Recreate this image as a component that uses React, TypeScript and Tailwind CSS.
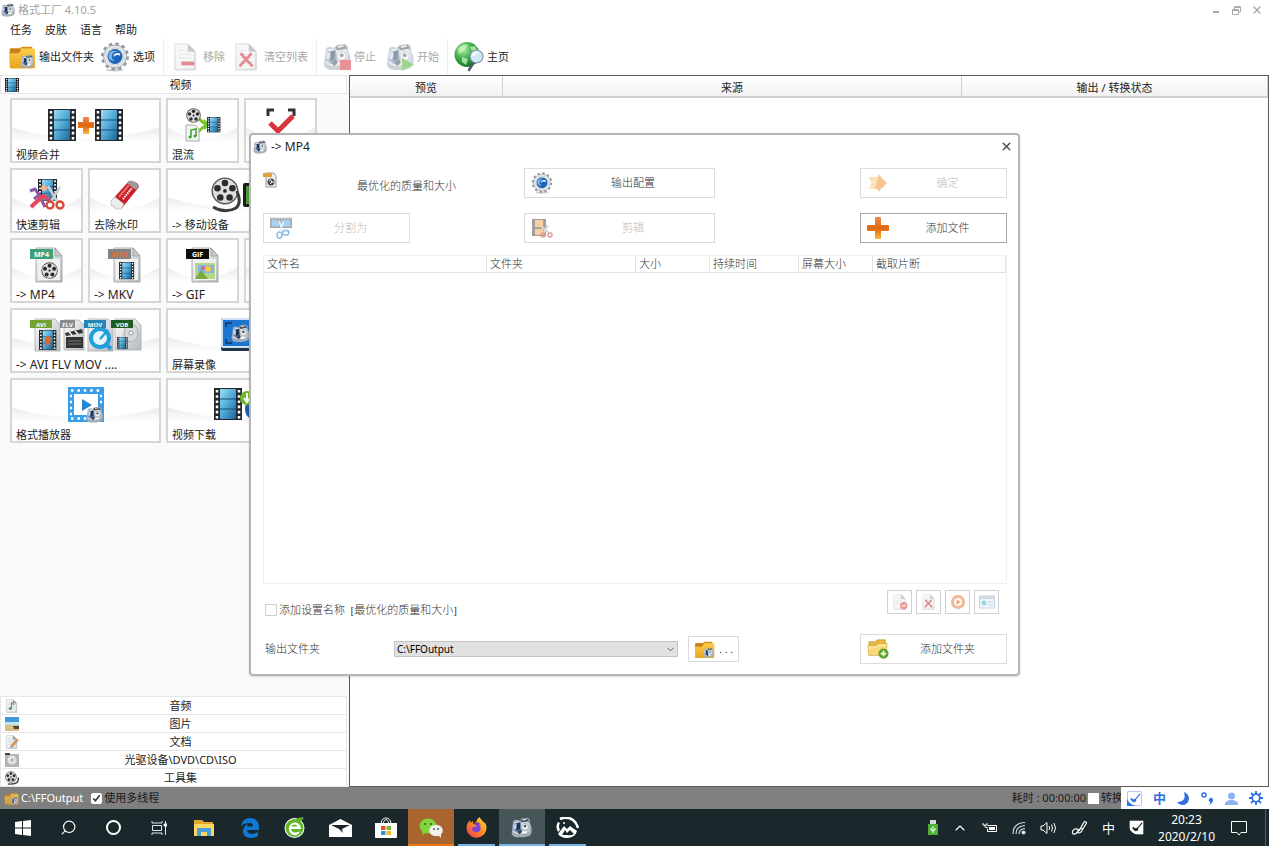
import type { ReactNode } from 'react'
import { ChevronDown, ChevronUp, Search, X } from 'lucide-react'
import { FaFirefoxBrowser } from 'react-icons/fa'

const songFont = "font-['Liberation_Serif','Noto_Sans_CJK_SC',serif] font-light"

/* ---------- drawings ---------- */

function Defs() {
  return (
    <svg width="0" height="0" className="absolute" aria-hidden="true">
      <defs>
        <linearGradient id="film" x1="0" y1="0" x2="1" y2="1">
          <stop offset="0" stopColor="#9bdcf5" />
          <stop offset=".5" stopColor="#4fa9d6" />
          <stop offset="1" stopColor="#1e6496" />
        </linearGradient>
        <linearGradient id="gold" x1="0" y1="0" x2="0" y2="1">
          <stop offset="0" stopColor="#fbcf4c" />
          <stop offset="1" stopColor="#e9a41e" />
        </linearGradient>
        <linearGradient id="orange" x1="0" y1="0" x2="0" y2="1">
          <stop offset="0" stopColor="#f08a52" />
          <stop offset=".5" stopColor="#e0660f" />
          <stop offset="1" stopColor="#f8b637" />
        </linearGradient>
        <linearGradient id="metal" x1="0" y1="0" x2="1" y2="1">
          <stop offset="0" stopColor="#ffffff" />
          <stop offset="1" stopColor="#b3b9c0" />
        </linearGradient>
        <linearGradient id="swoosh" x1="0" y1="0" x2="0" y2="1">
          <stop offset="0" stopColor="#ececec" />
          <stop offset="1" stopColor="#ffffff" />
        </linearGradient>
        <radialGradient id="globe" cx=".35" cy=".3" r=".8">
          <stop offset="0" stopColor="#b5efa5" />
          <stop offset=".5" stopColor="#37a847" />
          <stop offset="1" stopColor="#0b6b22" />
        </radialGradient>
        <linearGradient id="fire" x1="1" y1="0" x2="0" y2="1">
          <stop offset="0" stopColor="#ffe14a" />
          <stop offset=".5" stopColor="#ff8a22" />
          <stop offset="1" stopColor="#f0305c" />
        </linearGradient>
      </defs>
    </svg>
  )
}

function CamArt() {
  return (
    <g>
      <path d="M3 8Q3 4 7 4L12 5 15 2 24 1 27 4V9L29 13Q31 25 26 27L18 29H8Q1 28 1 22Z" fill="#a3acb9" />
      <path d="M4 9Q8 5 13 7L24 6 27 13 26 23Q20 28 8 26L3 21Z" fill="url(#metal)" />
      <path d="M13 4 23 2 26 6 15 8Z" fill="#4a525d" />
      <path d="M16 4.500 22 3.200" stroke="#e6eaee" strokeWidth="1.500" />
      <path d="M5 9 14 7 15 17 9 23 3 19Z" fill="#6f8fb8" />
      <path d="M8 9 13 8 13 17 8 20Z" fill="#22334f" />
      <path d="M5 11 8 10 7 16 4 18Z" fill="#cfe0f3" />
      <path d="M9 21 14 17 16 21 12 25Z" fill="#35445c" />
      <circle cx="20" cy="14" r="5" fill="#f0f3f6" stroke="#8f98a3" />
      <circle cx="20" cy="13" r="2" fill="#47546a" />
      <path d="M5 24Q15 29 26 22" stroke="#7d8794" fill="none" />
      <path d="M16 20H24L22 24H15Z" fill="#fff" stroke="#a2aab3" strokeWidth=".6" />
    </g>
  )
}

function Cam({ size = 14, badge }: { size?: number; badge?: 'stop' | 'play' }) {
  return (
    <svg width={size} height={size} viewBox="0 0 30 30">
      <CamArt />
      {badge === 'stop' && <path d="M18 18H30V29H18Z" fill="#d32530" />}
      {badge === 'play' && <path d="M17 16 30 23 17 30Z" fill="#3fae24" />}
    </svg>
  )
}

function FolderCam({ size = 28 }: { size?: number }) {
  return (
    <svg width={size} height={size} viewBox="0 0 30 30">
      <path d="M2 6H12L15 4H26V27H2Z" fill="#d88f14" />
      <path d="M1 10H11L14 6H28Q29 6 29 8V26Q29 27 27 27H3Q2 27 2 25Z" fill="url(#gold)" />
      <path d="M2 6H12L14 8 11 11H2Z" fill="#c98018" />
      <g transform="translate(13 12) scale(.5)">
        <CamArt />
      </g>
    </svg>
  )
}

function Gear({ size = 30 }: { size?: number }) {
  return (
    <svg width={size} height={size} viewBox="0 0 30 30">
      <ellipse cx="15" cy="28" rx="9" ry="1.500" fill="#cfcfcf" />
      <circle cx="15" cy="14.500" r="12.500" fill="none" stroke="#92989f" strokeWidth="3" strokeDasharray="3.300 3.245" />
      <circle cx="15" cy="14.500" r="11.500" fill="#e4e7ea" stroke="#979da4" strokeWidth=".8" />
      <circle cx="15" cy="14.500" r="8.500" fill="#f7f9fa" stroke="#b7bcc2" strokeWidth=".6" />
      <circle cx="15" cy="14.500" r="7.500" fill="#1b63b4" />
      <path d="M19.500 10.500Q14 8 12 13Q11 17 15 19Q8 19 8.500 13Q11 6 19.500 10.500Z" fill="#79b9ee" />
      <path d="M18 11Q13 11 13.500 15Q16 12 20 13.500Q21 11 18 11Z" fill="#f4faff" />
    </svg>
  )
}

function PageArt() {
  return (
    <g>
      <path d="M3 1H17L25 9V29H3Z" fill="url(#metal)" stroke="#a9a9a9" strokeWidth=".8" />
      <path d="M5 3H16V10H23V27H5Z" fill="#f0f1f3" />
      <path d="M17 1V9H25Z" fill="#8f949a" />
      <path d="M7 8H14M7 12H21M7 16H21M7 20H21" stroke="#c3ccd5" />
    </g>
  )
}

function Page({ mark, size = 28 }: { mark?: 'minus' | 'cross' | 'note' | 'pen' | 'dot'; size?: number }) {
  return (
    <svg width={size} height={size} viewBox="0 0 30 30">
      <PageArt />
      {mark === 'minus' && <path d="M10 20H24V24H10Z" fill="#cc1726" />}
      {mark === 'cross' && <path d="M8 11 21 25M20 11 7 25" stroke="#cc1726" strokeWidth="3" />}
      {mark === 'note' && (
        <g fill="#2fa336" stroke="#2fa336" strokeWidth="2">
          <path d="M14 20V7Q15 11 20 12" fill="none" />
          <ellipse cx="11.500" cy="20.500" rx="2.500" ry="2" />
        </g>
      )}
      {mark === 'pen' && <path d="M13 22 25 8 29 11 17 25 12 27Z" fill="#f09b35" stroke="#6a86b5" />}
      {mark === 'dot' && (
        <g>
          <circle cx="22" cy="22" r="7" fill="#d83a32" />
          <path d="M18 22H26" stroke="#fff" strokeWidth="2" />
        </g>
      )}
    </svg>
  )
}

// filmstrip in a 28x32 box
function FilmArt() {
  return (
    <g>
      <path d="M0 0H28V32H0Z" fill="#22282e" />
      <path d="M6 1H22V31H6Z" fill="url(#film)" />
      <path d="M6 11H22M6 21H22" stroke="#194c70" />
      <path d="M3 2V31M25 2V31" stroke="#fff" strokeWidth="2.500" strokeDasharray="2.600 2.600" />
    </g>
  )
}

function ReelArt() {
  return (
    <g>
      <circle cx="15" cy="15" r="14.500" fill="#555" />
      <circle cx="15" cy="15" r="13" fill="#dedede" />
      <g fill="#2c2c2c">
        <circle cx="15" cy="6.500" r="3.500" />
        <circle cx="23" cy="12" r="3.500" />
        <circle cx="20" cy="22" r="3.500" />
        <circle cx="10" cy="22" r="3.500" />
        <circle cx="7" cy="12" r="3.500" />
        <circle cx="15" cy="15" r="2" />
      </g>
    </g>
  )
}

function Film({ size = 14 }: { size?: number }) {
  return (
    <svg width={size} height={size} viewBox="0 0 28 32" preserveAspectRatio="none">
      <FilmArt />
    </svg>
  )
}

function Plus({ size = 22 }: { size?: number }) {
  return (
    <svg width={size} height={size} viewBox="0 0 22 22">
      <path d="M8 1Q8 0 9 0H13Q14 0 14 1V8H21Q22 8 22 9V13Q22 14 21 14H14V21Q14 22 13 22H9Q8 22 8 21V14H1Q0 14 0 13V9Q0 8 1 8H8Z" fill="url(#orange)" />
    </svg>
  )
}

function Globe() {
  return (
    <svg width="30" height="30" viewBox="0 0 30 30">
      <circle cx="13" cy="12.500" r="12.500" fill="url(#globe)" />
      <path d="M4 7Q9 1 14 3L11 8 5 12ZM16 5 21 4 23 8 18 9ZM8 15 14 17 12 23 8 20Z" fill="#c9f3bd" opacity=".75" />
      <path d="M20 20 15 28" stroke="#4c5a66" strokeWidth="2.500" strokeLinecap="round" />
      <circle cx="22.500" cy="14.500" r="6.500" fill="#d3e8f6" stroke="#8294a2" strokeWidth="1.200" />
      <path d="M19 14Q20 10 24 11" stroke="#fff" strokeWidth="2" fill="none" />
    </svg>
  )
}

function MergeIcon() {
  return (
    <svg width="76" height="32" viewBox="0 0 76 32">
      <FilmArt />
      <g transform="translate(47 0)">
        <FilmArt />
      </g>
      <path d="M35 8H41V13H46V19H41V25H35V19H30V13H35Z" fill="url(#orange)" />
    </svg>
  )
}

function MixIcon() {
  return (
    <svg width="36" height="36" viewBox="0 0 36 36">
      <path d="M12 8Q16 16 24 18M12 27Q17 19 24 18" stroke="#7ac52e" strokeWidth="3" fill="none" />
      <path d="M19 12 26 18 19 23Z" fill="#7ac52e" />
      <g transform="translate(1 1) scale(.5)">
        <ReelArt />
      </g>
      <path d="M1 18H10L14 22V34H1Z" fill="#f3f3f3" stroke="#aaa" />
      <path d="M6 30V23L11 22V29" stroke="#36a72f" strokeWidth="1.500" fill="none" />
      <circle cx="5" cy="30" r="1.500" fill="#36a72f" />
      <circle cx="10" cy="29" r="1.500" fill="#36a72f" />
      <g transform="translate(22 10) scale(.48)">
        <FilmArt />
      </g>
    </svg>
  )
}

function CropCheck() {
  return (
    <svg width="30" height="34" viewBox="0 0 30 34">
      <path d="M2 8V2H8M22 2H28V8M2 26V32H8M22 32H28V26" stroke="#333" strokeWidth="3" fill="none" />
      <path d="M4 15 12 23 27 8" stroke="#d9363b" strokeWidth="5" fill="none" />
    </svg>
  )
}

function QuickCut() {
  return (
    <svg width="36" height="32" viewBox="0 0 36 32">
      <g transform="translate(9 0) scale(.68)">
        <FilmArt />
      </g>
      <circle cx="15" cy="9" r="3" fill="#efb28c" />
      <path d="M1 12 6 10 10 16 5 20M10 16 16 28" stroke="#8a5aa8" strokeWidth="3" fill="none" />
      <path d="M2 28 14 17 20 20" stroke="#e8475a" strokeWidth="4" fill="none" />
      <path d="M19 7 29 24M31 8 21 24" stroke="#c9ced4" strokeWidth="2.500" />
      <circle cx="21" cy="26" r="3.500" fill="none" stroke="#d94736" strokeWidth="2.300" />
      <circle cx="31" cy="26" r="3.500" fill="none" stroke="#d94736" strokeWidth="2.300" />
    </svg>
  )
}

function Eraser() {
  return (
    <svg width="30" height="30" viewBox="0 0 30 30">
      <path d="M19 1Q22 0 28 4L29 7 12 28 7 29 1 25V21Z" fill="#c81f28" />
      <path d="M19 1Q24 0 29 6L26 10 17 3Z" fill="#9c9c9c" />
      <path d="M1 21 5 17 14 24 11 29H7L1 25Z" fill="#ededed" stroke="#b5b5b5" strokeWidth=".6" />
      <path d="M9 17 19 5" stroke="#ef6a64" strokeWidth="2" />
      <path d="M13 19 22 8" stroke="#fff" strokeWidth="2" strokeDasharray="1.500 .8" />
    </svg>
  )
}

function MobileIcon() {
  return (
    <svg width="66" height="36" viewBox="0 0 66 36">
      <g transform="translate(2 0) scale(.93)">
        <ReelArt />
      </g>
      <path d="M28 14Q33 26 27 31Q16 37 4 30" stroke="#3a3a3a" strokeWidth="3" fill="none" />
      <rect x="34" y="6" width="31" height="24" rx="2" fill="#1d1d1d" />
      <path d="M37 9H61V27H37Z" fill="#4d9a3d" />
    </svg>
  )
}

function TaggedPage({ tag, fill, ink = '#fff', kind }: { tag: string; fill: string; ink?: string; kind: 'reel' | 'film' | 'gif' }) {
  return (
    <svg width="38" height="38" viewBox="0 0 38 38">
      <path d="M8 2H27L34 10V36H8Z" fill="url(#metal)" stroke="#999" strokeWidth=".8" />
      <path d="M10 13H32V34H10Z" fill="#f1f1f1" />
      <path d="M27 2V10H34Z" fill="#c9c9c9" stroke="#8e8e8e" strokeWidth=".6" />
      <path d="M2 3H25V13H2Z" fill={fill} />
      <text x="13.500" y="10.500" textAnchor="middle" fontSize="7" fontWeight="700" fontFamily="Open Sans, sans-serif" fill={ink}>
        {tag}
      </text>
      {kind === 'reel' && (
        <g transform="translate(13 16) scale(.57)">
          <ReelArt />
        </g>
      )}
      {kind === 'film' && (
        <g transform="translate(13 16) scale(.54)">
          <FilmArt />
        </g>
      )}
      {kind === 'gif' && (
        <g>
          <path d="M11 17H31V33H11Z" fill="#b5d884" />
          <path d="M14 19H30V27H14Z" fill="#7fb8e8" />
          <path d="M11 33 17 24 24 33Z" fill="#78a940" />
          <circle cx="24" cy="23" r="3" fill="#f4cb3e" />
          <circle cx="19" cy="22" r="2" fill="#d9647c" />
        </g>
      )}
    </svg>
  )
}

function Tag({ x, label, fill, width }: { x: number; label: string; fill: string; width: number }) {
  return (
    <g>
      <path d={`M${x} 2H${x + width}V10H${x}Z`} fill={fill} />
      <text x={x + width / 2} y="8.500" textAnchor="middle" fontSize="6" fontWeight="700" fontFamily="Open Sans, sans-serif" fill="#fff">
        {label}
      </text>
    </g>
  )
}

function MultiFormat() {
  return (
    <svg width="114" height="34" viewBox="0 0 114 34">
      <g stroke="#aaa" strokeWidth=".8" fill="url(#metal)">
        <path d="M6 1H26L31 6V33H6Z" />
        <path d="M35 2H50L55 7V32H35Z" />
        <path d="M59 1H79L84 6V33H59Z" />
        <path d="M86 1H106L112 7V32H86Z" />
      </g>
      <g transform="translate(10 12) scale(.62)">
        <FilmArt />
        <path d="M9 14Q15 5 20 14L17 24H11Z" fill="#d06d36" />
      </g>
      <path d="M36 15 53 11 54 15 37 18Z" fill="#333" />
      <path d="M40 14 43 17M46 13 49 16" stroke="#fff" strokeWidth="1.500" />
      <path d="M37 19H54V30H37Z" fill="#333" />
      <path d="M39 23H52M39 26H52" stroke="#777" />
      <circle cx="71" cy="20" r="9" fill="#e8f4fa" stroke="#229fd9" strokeWidth="4" />
      <path d="M71 21 79 12" stroke="#229fd9" strokeWidth="2.500" />
      <path d="M76 25 82 31" stroke="#229fd9" strokeWidth="4" />
      <ellipse cx="102" cy="15" rx="7" ry="9" fill="#d5d8da" stroke="#aaa" />
      <circle cx="102" cy="15" r="2" fill="#fff" stroke="#999" />
      <g transform="translate(88 19) scale(.38)">
        <FilmArt />
      </g>
      <Tag x={1} label="AVI" fill="#78a22f" width={22} />
      <Tag x={31} label="FLV" fill="#8c8c8c" width={15} />
      <Tag x={55} label="MOV" fill="#2585b5" width={22} />
      <Tag x={82} label="VOB" fill="#1b5b24" width={22} />
    </svg>
  )
}

function ScreenRecord() {
  return (
    <svg width="44" height="36" viewBox="0 0 44 36">
      <rect x="1" y="1" width="42" height="33" rx="2" fill="#20344e" />
      <rect x="1" y="1" width="42" height="30" rx="2" fill="#cfe3f5" />
      <path d="M3 3H41V29H3Z" fill="#1c75cf" />
      <path d="M6 10V6H12M32 6H38V10M6 22V26H12M32 26H38V22" fill="none" stroke="#12356b" strokeWidth="1.500" />
      <g transform="translate(11 7) scale(.62)">
        <CamArt />
      </g>
    </svg>
  )
}

function PlayerIcon() {
  return (
    <svg width="36" height="36" viewBox="0 0 36 36">
      <path d="M0 0H36V35H0Z" fill="#399fea" />
      <path d="M6 7H30V28H6Z" fill="#fff" />
      <path d="M3 3.500H34M3 31.500H34" stroke="#fff" strokeWidth="2.500" strokeDasharray="2.500 3.900" />
      <path d="M2 9H4M2 15H4M2 21H4M2 27H4M32 9H34M32 15H34" stroke="#fff" strokeWidth="2.500" />
      <path d="M14 12 24 18 14 24Z" fill="#2487d4" />
      <g transform="translate(18 19) scale(.57)">
        <CamArt />
      </g>
    </svg>
  )
}

function DownloadIcon() {
  return (
    <svg width="56" height="34" viewBox="0 0 56 34">
      <FilmArt />
      <circle cx="43" cy="21" r="12" fill="#1e5da8" />
      <path d="M36 14Q44 9 49 17L44 21 38 19Z" fill="#6cb547" />
      <circle cx="33" cy="10" r="7" fill="#6db82c" />
      <path d="M33 5V12M30 10 33 14 36 10" stroke="#fff" strokeWidth="2" fill="none" />
    </svg>
  )
}

function SplitIcon() {
  return (
    <svg width="28" height="28" viewBox="0 0 28 28">
      <path d="M0 1H28V14H0Z" fill="#4b535a" />
      <path d="M2 4H12V12H2ZM15 4H26V12H15Z" fill="#51aaea" />
      <path d="M2 2.500H27" stroke="#fff" strokeDasharray="2 2" />
      <path d="M12 5 16 19M17 6 12 20" stroke="#dceaf5" strokeWidth="2" />
      <ellipse cx="12" cy="23" rx="3" ry="4" fill="none" stroke="#2c80ca" strokeWidth="2" />
      <ellipse cx="20" cy="20" rx="4" ry="3" fill="none" stroke="#2c80ca" strokeWidth="2" />
    </svg>
  )
}

function CutIcon() {
  return (
    <svg width="22" height="22" viewBox="0 0 22 22">
      <path d="M1 2H15V19H1Z" fill="#4d443b" />
      <path d="M4 3H12V10H4ZM4 12H12V18H4Z" fill="#f3a246" />
      <path d="M10 9 19 17M17 8 12 17" stroke="#b7b7b7" strokeWidth="2" />
      <circle cx="12" cy="18" r="2" fill="none" stroke="#c7392f" strokeWidth="1.500" />
      <circle cx="19" cy="18" r="2" fill="none" stroke="#c7392f" strokeWidth="1.500" />
    </svg>
  )
}

function Arrow() {
  return (
    <svg width="20" height="20" viewBox="0 0 20 20">
      <path d="M1 4H10V1L19 10 10 19V16H1L4 10Z" fill="#f38b23" />
      <path d="M1 4H10L7 16H1L4 10Z" fill="#f9c676" />
    </svg>
  )
}

function FolderPlus() {
  return (
    <svg width="24" height="22" viewBox="0 0 24 22">
      <path d="M2 3H9L11 1H20V15H3Z" fill="#e6b840" stroke="#b98a1c" strokeWidth=".6" />
      <path d="M1 7H10L12 5H22L21 18H2Z" fill="#f8da78" stroke="#c59a35" strokeWidth=".6" />
      <path d="M2 10 11 9 13 7 21 7" stroke="#fff3c1" fill="none" />
      <circle cx="18" cy="16" r="5.500" fill="#5da62b" />
      <path d="M18 13V19M15 16H21" stroke="#fff" strokeWidth="1.800" />
    </svg>
  )
}

function Picture() {
  return (
    <svg width="14" height="14" viewBox="0 0 14 14">
      <path d="M0 0H14V14H0Z" fill="#3f9bd8" />
      <path d="M0 5H14V8H0Z" fill="#bfe3f0" />
      <path d="M0 8H14V14H0Z" fill="#d8bd87" />
      <path d="M8 9H14V12H9Z" fill="#4d4538" />
    </svg>
  )
}

function Disc() {
  return (
    <svg width="14" height="14" viewBox="0 0 14 14">
      <path d="M0 1H14V14H0Z" fill="#b4b4b4" />
      <path d="M0 0H5V2H0Z" fill="#444" />
      <circle cx="7" cy="7" r="4.500" fill="#e2e2e2" />
      <path d="M7 7 10 4 11 7Z" fill="#bde2c9" />
      <circle cx="7" cy="7" r="1" fill="#888" />
    </svg>
  )
}

function Toolset() {
  return (
    <svg width="14" height="14" viewBox="0 0 30 30">
      <g transform="scale(.85)">
        <ReelArt />
      </g>
      <path d="M28 14Q32 30 6 28" stroke="#444" strokeWidth="3" fill="none" />
    </svg>
  )
}

function ImeMark({ bg = '#2f74e0', size = 16 }: { bg?: string; size?: number }) {
  return (
    <svg width={size} height={size} viewBox="0 0 16 16">
      <rect x=".5" y=".5" width="15" height="15" rx="1" fill="#fff" stroke={bg} strokeOpacity=".4" />
      <path d="M0 8Q2 14 9 16H0Z" fill={bg} />
      <path d="M4 8 7.500 11.500" stroke={bg} strokeWidth="2" />
      <path d="M8 10 14 3" stroke={bg} strokeWidth="1.200" />
      <circle cx="8" cy="10" r="1.800" fill={bg} />
    </svg>
  )
}

/* ---------- main window ---------- */

function ToolButton({ icon, label, disabled }: { icon: ReactNode; label: string; disabled?: boolean }) {
  return (
    <button type="button" disabled={disabled} className="flex items-center gap-[3px] disabled:text-[#a8a8a8]">
      <span className={disabled ? 'opacity-50' : ''}>{icon}</span>
      {label}
    </button>
  )
}

function Divider({ className }: { className: string }) {
  return <span className={`h-9 w-px bg-[#ececec] ${className}`} />
}

const tiles: { label: string; wide?: boolean; latin?: boolean; icon: ReactNode }[] = [
  { label: '视频合并', wide: true, icon: <MergeIcon /> },
  { label: '混流', icon: <MixIcon /> },
  { label: '', icon: <CropCheck /> },
  { label: '快速剪辑', icon: <QuickCut /> },
  { label: '去除水印', icon: <Eraser /> },
  { label: '-> 移动设备', wide: true, icon: <MobileIcon /> },
  { label: '-> MP4', latin: true, icon: <TaggedPage tag="MP4" fill="#3fa17a" kind="reel" /> },
  { label: '-> MKV', latin: true, icon: <TaggedPage tag="MKV" fill="#848484" ink="#ef6b2f" kind="film" /> },
  { label: '-> GIF', latin: true, icon: <TaggedPage tag="GIF" fill="#0d0d0d" kind="gif" /> },
  { label: '', icon: null },
  { label: '-> AVI FLV MOV ....', wide: true, latin: true, icon: <MultiFormat /> },
  { label: '屏幕录像', wide: true, icon: <ScreenRecord /> },
  { label: '格式播放器', wide: true, icon: <PlayerIcon /> },
  { label: '视频下载', wide: true, icon: <DownloadIcon /> },
]

const categories = [
  { label: '音频', icon: <Page mark="note" size={14} /> },
  { label: '图片', icon: <Picture /> },
  { label: '文档', icon: <Page mark="pen" size={14} /> },
  { label: '光驱设备\\DVD\\CD\\ISO', icon: <Disc /> },
  { label: '工具集', icon: <Toolset /> },
]

function Tile({ label, wide, latin, icon }: { label: string; wide?: boolean; latin?: boolean; icon: ReactNode }) {
  return (
    <button
      type="button"
      aria-label={label || undefined}
      className={`relative flex h-[65px] flex-col border-2 border-[#d6d6d6] bg-white text-left ${wide ? 'col-span-2' : ''}`}
    >
      <svg className="absolute inset-0 size-full" viewBox="0 0 100 60" preserveAspectRatio="none" aria-hidden="true">
        <path d="M0 27Q50 48 100 27V42H0Z" fill="url(#swoosh)" />
      </svg>
      <span className="relative flex min-h-0 w-full flex-1 items-center justify-center">{icon}</span>
      <span className={`relative h-3 px-1 leading-3 ${latin ? 'text-xs leading-3' : ''}`}>{label}</span>
    </button>
  )
}

function CategoryRow({ label, icon }: { label: string; icon: ReactNode }) {
  return (
    <button type="button" className="flex h-[18px] w-[347px] items-center border border-b-0 border-[#e6e6e6] bg-white pr-1 pl-1">
      {icon}
      <span className="flex-1 text-center leading-4">{label}</span>
    </button>
  )
}

function Sidebar() {
  return (
    <aside className="flex w-[349px] shrink-0 flex-col bg-[#fafafa]">
      <div className="border-b border-[#e6e6e6]">
        <CategoryRow label="视频" icon={<Film />} />
      </div>
      <div className="grid flex-1 grid-cols-[repeat(4,73px)] content-start gap-[5px] pt-1 pl-2.5">
        {tiles.map((tile, i) => (
          <Tile key={i} {...tile} />
        ))}
      </div>
      <div className="border-b border-[#e6e6e6]">
        {categories.map((c) => (
          <CategoryRow key={c.label} {...c} />
        ))}
      </div>
    </aside>
  )
}

function JobList() {
  const cell = 'border-r border-b-2 border-[#d0d0d0] bg-linear-to-b from-white to-[#f1f1f1] p-0 pt-1 font-normal'
  return (
    <section className="min-w-0 flex-1 border border-[#5a5a5a] bg-white">
      <table className="w-full table-fixed border-separate border-spacing-0">
        <thead>
          <tr>
            <th className={`w-1/6 ${cell}`}>预览</th>
            <th className={`w-1/2 ${cell}`}>来源</th>
            <th className={`w-1/3 ${cell}`}>输出 / 转换状态</th>
          </tr>
        </thead>
      </table>
    </section>
  )
}

/* ---------- MP4 dialog ---------- */

function DialogButton({ icon, label, disabled, strong }: { icon: ReactNode; label: string; disabled?: boolean; strong?: boolean }) {
  return (
    <button
      type="button"
      disabled={disabled}
      className={`flex h-[30px] w-full items-center border pl-1.5 disabled:text-[#bdbdbd] ${strong ? 'border-[#a8a8a8]' : 'border-[#dcdcdc]'}`}
    >
      <span className={`flex w-[22px] justify-center ${disabled ? 'opacity-50' : ''}`}>{icon}</span>
      <span className="flex-1 text-center">{label}</span>
    </button>
  )
}

const fileColumns = [
  { label: '文件名', width: 'w-[223px]' },
  { label: '文件夹', width: 'w-[149px]' },
  { label: '大小', width: 'w-[74px]' },
  { label: '持续时间', width: 'w-[89px]' },
  { label: '屏幕大小', width: 'w-[74px]' },
  { label: '截取片断', width: '' },
]

const listTools = [
  { name: '移除', icon: <Page mark="dot" size={16} /> },
  { name: '清空列表', icon: <Page mark="cross" size={16} /> },
  {
    name: '播放',
    icon: (
      <svg width="14" height="14" viewBox="0 0 14 14">
        <circle cx="7" cy="7" r="7" fill="#e8742a" />
        <circle cx="7" cy="7" r="4" fill="#fff" />
        <path d="M5.500 4 10 7 5.500 10Z" fill="#e0601a" />
      </svg>
    ),
  },
  {
    name: '文件信息',
    icon: (
      <svg width="16" height="14" viewBox="0 0 16 14">
        <path d="M.5 1H15.500V13H.5Z" fill="#e6eff6" stroke="#8aa6bd" />
        <path d="M1 1H15V4H1Z" fill="#9fb9ce" />
        <circle cx="5" cy="8" r="2.500" fill="#3fa6d6" />
        <path d="M9 7H14M9 10H14" stroke="#8aa6bd" />
      </svg>
    ),
  },
]

function Dialog() {
  return (
    <div
      role="dialog"
      aria-label="-> MP4"
      className="absolute top-[133px] left-[249px] flex h-[543px] w-[771px] flex-col rounded-sm border-2 border-[#b5b5b5] bg-white pr-[11px] pl-3 text-[#333] shadow-sm"
    >
      <header className="-ml-2.5 flex h-[23px] shrink-0 items-center gap-1 text-[#222]">
        <Cam />
        <h2 className="flex-1 text-xs">-&gt; MP4</h2>
        <button type="button" aria-label="关闭" className="-mr-1.5">
          <X size={13} strokeWidth={2.8} className="text-[#555]" />
        </button>
      </header>

      <div className={`flex flex-1 flex-col ${songFont}`}>
        <div className="mt-2.5 grid grid-cols-[147px_114fr_191px_146fr_147px] gap-y-[15px]">
          <div className="col-span-2 flex">
            <span className="pt-1">
              <svg width="14" height="16" viewBox="0 0 14 16">
                <path d="M3 1H11L13 4V15H3Z" fill="#f0f0f0" stroke="#999" />
                <path d="M0 1H9V5H0Z" fill="#e3a33c" />
                <circle cx="8" cy="10" r="3.500" fill="#444" />
                <path d="M7 7 9 10 7 12M6 9H7M10 9V11" stroke="#fff" fill="none" />
              </svg>
            </span>
            <p className="pt-2 pl-20 leading-5">最优化的质量和大小</p>
          </div>
          <DialogButton icon={<Gear size={22} />} label="输出配置" />
          <div className="col-start-5">
            <DialogButton icon={<Arrow />} label="确定" disabled />
          </div>
          <DialogButton icon={<SplitIcon />} label="分割为" disabled />
          <div className="col-start-3">
            <DialogButton icon={<CutIcon />} label="剪辑" disabled />
          </div>
          <div className="col-start-5">
            <DialogButton icon={<Plus />} label="添加文件" strong />
          </div>
        </div>

        <div className="mt-3 flex-1 border border-[#efefef]">
          <table className="w-full table-fixed border-separate border-spacing-0">
            <thead>
              <tr className="text-left leading-4">
                {fileColumns.map((c) => (
                  <th key={c.label} className={`border-r border-b border-[#e2e2e2] p-0 pl-[3px] font-light ${c.width}`}>
                    {c.label}
                  </th>
                ))}
              </tr>
            </thead>
          </table>
        </div>

        <div className="mt-1.5 flex h-6 justify-between pr-2">
          <label className="flex items-center gap-0.5 pt-4 pl-0.5">
            <input type="checkbox" className="size-3 appearance-none border border-[#cfcfcf]" />
            <span className="whitespace-pre">添加设置名称  [最优化的质量和大小]</span>
          </label>
          <div className="flex gap-1">
            {listTools.map((t) => (
              <button
                key={t.name}
                type="button"
                aria-label={t.name}
                disabled
                className="flex h-6 w-[25px] items-center justify-center border border-[#d0d0d0]"
              >
                <span className="opacity-50">{t.icon}</span>
              </button>
            ))}
          </div>
        </div>

        <div className="mt-5 mb-2.5 flex items-center">
          <label htmlFor="out-folder" className="w-[131px] pl-0.5">
            输出文件夹
          </label>
          <span className="relative">
            <select
              id="out-folder"
              className="block h-4 w-[284px] appearance-none border border-[#c4c4c4] bg-[#e1e1e1] pl-0.5 font-['Noto_Sans',sans-serif] text-[10px] leading-[14px] font-normal text-black"
            >
              <option>C:\FFOutput</option>
            </select>
            <ChevronDown size={11} className="pointer-events-none absolute top-[3px] right-0.5 text-[#555]" />
          </span>
          <button type="button" className="ml-2.5 flex h-[26px] w-[51px] items-center justify-center gap-1 border border-[#dcdcdc]">
            <FolderCam size={21} />
            <span>. . .</span>
          </button>
          <div className="ml-auto w-[147px]">
            <DialogButton icon={<FolderPlus />} label="添加文件夹" />
          </div>
        </div>
      </div>
    </div>
  )
}

/* ---------- bottom bars ---------- */

// floating input method strip, sits over the end of the status bar
function ImeBar() {
  return (
    <div className="absolute inset-y-0 right-0 flex items-center gap-[11px] bg-white px-1.5 text-[#2f6fe0]">
      <ImeMark size={15} />
      <span className="text-[13px] font-bold">中</span>
      <svg width="13" height="13" viewBox="0 0 13 13">
        <path d="M7 0Q12 2 12 7Q11 13 5 13Q2 13 0 10Q6 10 7.500 6Q8 3 7 0Z" fill="currentColor" />
      </svg>
      <svg width="13" height="14" viewBox="0 0 13 14">
        <circle cx="3" cy="4" r="2" fill="none" stroke="currentColor" strokeWidth="1.500" />
        <path d="M8 8Q11 5 12 9Q12 12 8 14Q10 11 9 11Q7 10 8 8Z" fill="currentColor" />
      </svg>
      <svg width="13" height="13" viewBox="0 0 13 13" className="text-[#8fb2f0]">
        <circle cx="6.500" cy="4" r="3.500" fill="currentColor" />
        <path d="M0 13V11Q1 9 5 8H8Q12 9 13 11V13Z" fill="currentColor" />
      </svg>
      <svg width="14" height="14" viewBox="0 0 14 14" fill="none" stroke="currentColor">
        <circle cx="7" cy="7" r="3.800" strokeWidth="1.800" />
        <path d="M7 0V3M7 11V14M0 7H3M11 7H14M2 2 4.200 4.200M9.800 9.800 12 12M12 2 9.800 4.200M4.200 9.800 2 12" strokeWidth="1.800" />
      </svg>
    </div>
  )
}

function StatusBar() {
  return (
    <footer className="relative flex h-[22px] items-center bg-[#7f7f7f] pr-[135px] pl-1 text-[#1c1c1c]">
      <span className="opacity-75">
        <FolderCam size={15} />
      </span>
      <span className="ml-0.5 text-white">C:\FFOutput</span>
      <label className="ml-2 flex items-center gap-0.5">
        <input type="checkbox" defaultChecked className="size-[11px] accent-white" />
        使用多线程
      </label>
      <span className="ml-auto">耗时 : 00:00:00</span>
      <label className="ml-0.5 flex items-center gap-0.5 whitespace-nowrap">
        <input type="checkbox" className="size-[11px] shrink-0 appearance-none bg-white" />
        转换完
      </label>
      <ImeBar />
    </footer>
  )
}

const apps: { name: string; icon: ReactNode; tone?: string; line?: string }[] = [
  {
    name: '开始菜单',
    icon: (
      <svg width="16" height="16" viewBox="0 0 16 16">
        <path d="M0 2 7 1V7.500H0ZM8 1 16 0V7.500H8ZM0 8.500H7V15L0 14ZM8 8.500H16V16L8 15Z" fill="#fff" />
      </svg>
    ),
  },
  { name: '搜索', icon: <Search size={17} strokeWidth={1.6} className="-scale-x-100" /> },
  { name: 'Cortana', icon: <span className="size-[15px] rounded-full border-2 border-white" /> },
  {
    name: '任务视图',
    icon: (
      <svg width="16" height="16" viewBox="0 0 16 16" fill="none" stroke="#e4e8ea">
        <path d="M1 1V3H11V1M1 15V13H11V15M1.500 5.500H10.500V10.500H1.500ZM14.500 1V15" />
        <path d="M13 4H16V6H13Z" fill="#fff" />
      </svg>
    ),
  },
  {
    name: '文件资源管理器',
    icon: (
      <svg width="20" height="18" viewBox="0 0 20 18">
        <path d="M0 1H8L10 3H19V7H0Z" fill="#e1a92c" />
        <path d="M0 5H20V17H0Z" fill="#fbd866" />
        <path d="M3 17V10Q3 9 4 9H16Q17 9 17 10V17H13V13H7V17Z" fill="#4c9fd4" />
      </svg>
    ),
  },
  {
    name: 'Edge',
    icon: (
      <svg width="20" height="20" viewBox="0 0 20 20">
        <path d="M1 9Q2 0 10 0Q19 0 19 10V12H7Q8 16 12 16Q15 16 18 14V18Q15 20 11 20Q3 20 3 13Q3 8 9 5Q3 5 1 9ZM7 8.500H13Q13 5 10 5Q7.500 5 7 8.500Z" fill="#0f78d4" />
      </svg>
    ),
  },
  {
    name: '360浏览器',
    icon: (
      <svg width="22" height="22" viewBox="0 0 22 22">
        <circle cx="10.500" cy="11" r="10" fill="#fff" />
        <circle cx="10.500" cy="11" r="9" fill="#62b62a" />
        <path d="M17 12H7Q8 16 12 15.500L16 14.500Q14 19 9.500 18Q4 16 5 10Q7 5 12 5.500Q17 7 17 12ZM7.500 9.500H13.500Q13 7.500 10.500 7.500Q8 7.500 7.500 9.500Z" fill="#fff" />
        <path d="M11 3Q17-1 20 1Q18 2 17 5" fill="#62b62a" />
      </svg>
    ),
  },
  {
    name: '邮件',
    icon: (
      <svg width="23" height="18" viewBox="0 0 23 18">
        <path d="M0 6 11.500 0 23 6V18H0Z" fill="#fff" />
        <path d="M2 6H21L13 10 14 14 10 10Z" fill="#1a282c" />
      </svg>
    ),
  },
  {
    name: 'Microsoft Store',
    icon: (
      <svg width="22" height="22" viewBox="0 0 22 22">
        <path d="M6 6Q7 1 11 1Q15 1 16 6M8 6Q11-1 14 6" fill="none" stroke="#eee" />
        <path d="M0 6H22V20Q22 21 21 21H1Q0 21 0 20Z" fill="#fff" />
        <path d="M6 9H10.500V13H6Z" fill="#e8502c" />
        <path d="M11.500 9H16V13H11.500Z" fill="#7db82b" />
        <path d="M6 14H10.500V18H6Z" fill="#2596d8" />
        <path d="M11.500 14H16V18H11.500Z" fill="#f5b81f" />
      </svg>
    ),
  },
  {
    name: '微信',
    tone: 'bg-[#a9652f]',
    line: 'w-full bg-[#f0761a]',
    icon: (
      <svg width="24" height="20" viewBox="0 0 24 20">
        <ellipse cx="9" cy="8" rx="8.500" ry="7.500" fill="#7fd63a" />
        <path d="M4 12 3 17 8 14Z" fill="#7fd63a" />
        <ellipse cx="17" cy="12.500" rx="6.800" ry="5.800" fill="#f0f0f0" />
        <path d="M19 17 22 20 22 15Z" fill="#f0f0f0" />
        <g fill="#4a4a4a">
          <circle cx="6" cy="6" r="1" />
          <circle cx="12" cy="6" r="1" />
          <circle cx="15" cy="11" r=".9" />
          <circle cx="19" cy="11" r=".9" />
        </g>
      </svg>
    ),
  },
  {
    name: 'Firefox',
    line: 'w-[37px] bg-[#74b3e3]',
    icon: (
      <span className="relative flex">
        <span className="absolute top-1.5 left-1.5 size-2.5 rounded-full bg-[#7a43d6]" />
        <FaFirefoxBrowser size={21} fill="url(#fire)" className="relative" />
      </span>
    ),
  },
  { name: '格式工厂', tone: 'bg-[#465558]', line: 'w-full bg-[#74b3e3]', icon: <Cam size={21} /> },
  {
    name: '快剪辑',
    line: 'w-[37px] bg-[#74b3e3]',
    icon: (
      <svg width="24" height="22" viewBox="0 0 24 22">
        <path d="M3 15Q0 9 3 5L5 6Q3 9 5 13Z" fill="#fff" />
        <path d="M5 2Q12-1 18 3Q22 6 23 11" fill="none" stroke="#fff" strokeWidth="2.500" />
        <path d="M22 14Q20 21 12 21Q6 21 3 17L9 9 12 12 15 9Z" fill="#fff" />
        <path d="M7 18 10 13 12 16 15 13 19 17Q16 19 12 18Z" fill="#1a282c" />
        <circle cx="9" cy="6" r="1" fill="#fff" />
      </svg>
    ),
  },
]

function TrayIcons() {
  return (
    <>
      <svg width="10" height="15" viewBox="0 0 10 15">
        <path d="M2 0H8V4H2Z" fill="#d9d9d9" />
        <path d="M0 4H10V15H0Z" fill="#4cb034" />
        <path d="M5 6V13M3 8V10L5 11 7 10V8" stroke="#fff" fill="none" />
      </svg>
      <ChevronUp size={16} strokeWidth={1.7} />
      <svg width="16" height="12" viewBox="0 0 16 12" fill="none" stroke="#fff">
        <path d="M5.500 3.500H14.500V9.500H5.500V7M1 1V3H5V1M3 3V5L6 6" />
        <path d="M7 5H13V8H7Z" fill="#fff" stroke="none" />
      </svg>
      <svg width="14" height="14" viewBox="0 0 14 14" fill="none" stroke="#d0d5d7" strokeWidth="1.200">
        <path d="M1 13Q1 2 13 1.500M4 13Q4 5 13 4.500M7 13Q7 8 13 7.500" />
        <circle cx="11.500" cy="11.500" r="1.500" fill="#fff" />
      </svg>
      <svg width="17" height="14" viewBox="0 0 17 14" fill="none" stroke="#fff">
        <path d="M1 5H3L7 1.500V12.500L3 9H1ZM9 5Q10.500 7 9 9M11.500 3.500Q13.500 7 11.500 10.500M14 2Q17 7 14 12" />
      </svg>
      <svg width="17" height="16" viewBox="0 0 17 16" fill="none" stroke="#fff" strokeWidth="1.200">
        <path d="M8 11 13 2Q15 1 15.500 3L10 12Q7 14 7 12Q8 8 4 9Q0 11 2 14Q5 15 7 11Q10 7 11 9" />
      </svg>
      <span className="text-[13px]">中</span>
      <ImeMark bg="#1a282c" size={15} />
    </>
  )
}

function Taskbar() {
  return (
    <nav aria-label="任务栏" className="flex h-[37px] items-stretch bg-[#1a282c] text-white">
      <div className="grid w-[590px] grid-cols-13">
        {apps.map((a) => (
          <button key={a.name} type="button" aria-label={a.name} className={`relative flex items-center justify-center ${a.tone ?? ''}`}>
            {a.icon}
            {a.line && (
              <span className="absolute inset-x-0 bottom-0 flex justify-center">
                <span className={`h-0.5 ${a.line}`} />
              </span>
            )}
          </button>
        ))}
      </div>
      <div className="ml-auto flex items-center gap-3.5 pr-[3px]">
        <TrayIcons />
        <time className="text-center text-xs leading-[17px]">
          20:23
          <br />
          2020/2/10
        </time>
        <svg width="16" height="16" viewBox="0 0 16 16" fill="none" stroke="#fff" className="ml-0.5">
          <path d="M.5 1.500H15.500V12.500H10L8 15 6 12.500H.5Z" />
        </svg>
        <span className="ml-1 h-full w-px bg-[#526064]" />
      </div>
    </nav>
  )
}

export default function App() {
  return (
    <div className="relative flex min-h-screen flex-col bg-white font-['Noto_Sans','Noto_Sans_CJK_SC',sans-serif] text-[11px] leading-4 text-[#222]">
      <Defs />
      <header className="flex h-5 items-center gap-[3px] pr-1.5 pl-px text-[#a3a3a3]">
        <Cam />
        <h1 className="flex-1">格式工厂 4.10.5</h1>
        <div className="flex items-center gap-2.5">
          <button type="button" aria-label="最小化" className="flex size-3 items-center justify-center pt-1">
            <span className="h-0.5 w-1.5 bg-[#aaa]" />
          </button>
          <button type="button" aria-label="还原">
            <svg width="9" height="9" viewBox="0 0 9 9" fill="none" stroke="#aaa">
              <path d="M.5 3.500H6.500V8.500H.5ZM2.500 3V.5H8.500V6H7M.5 4.500H6.500M2.500 1.500H8.500" />
            </svg>
          </button>
          <button type="button" aria-label="关闭">
            <X size={12} strokeWidth={2.5} />
          </button>
        </div>
      </header>

      <nav className="flex h-[19px] items-center gap-[13px] pl-2.5">
        {['任务', '皮肤', '语言', '帮助'].map((m) => (
          <button key={m} type="button">
            {m}
          </button>
        ))}
      </nav>

      <div className="flex h-9 items-center pl-2">
        <ToolButton icon={<FolderCam />} label="输出文件夹" />
        <span className="w-1.5" />
        <ToolButton icon={<Gear />} label="选项" />
        <Divider className="mx-2" />
        <ToolButton icon={<Page mark="minus" />} label="移除" disabled />
        <span className="w-2" />
        <ToolButton icon={<Page mark="cross" />} label="清空列表" disabled />
        <Divider className="mr-1.5 ml-2" />
        <ToolButton icon={<Cam size={28} badge="stop" />} label="停止" disabled />
        <span className="w-2.5" />
        <ToolButton icon={<Cam size={28} badge="play" />} label="开始" disabled />
        <Divider className="mr-1.5 ml-2" />
        <ToolButton icon={<Globe />} label="主页" />
      </div>

      <main className="flex flex-1">
        <Sidebar />
        <JobList />
      </main>

      <StatusBar />
      <Taskbar />
      <Dialog />
    </div>
  )
}
